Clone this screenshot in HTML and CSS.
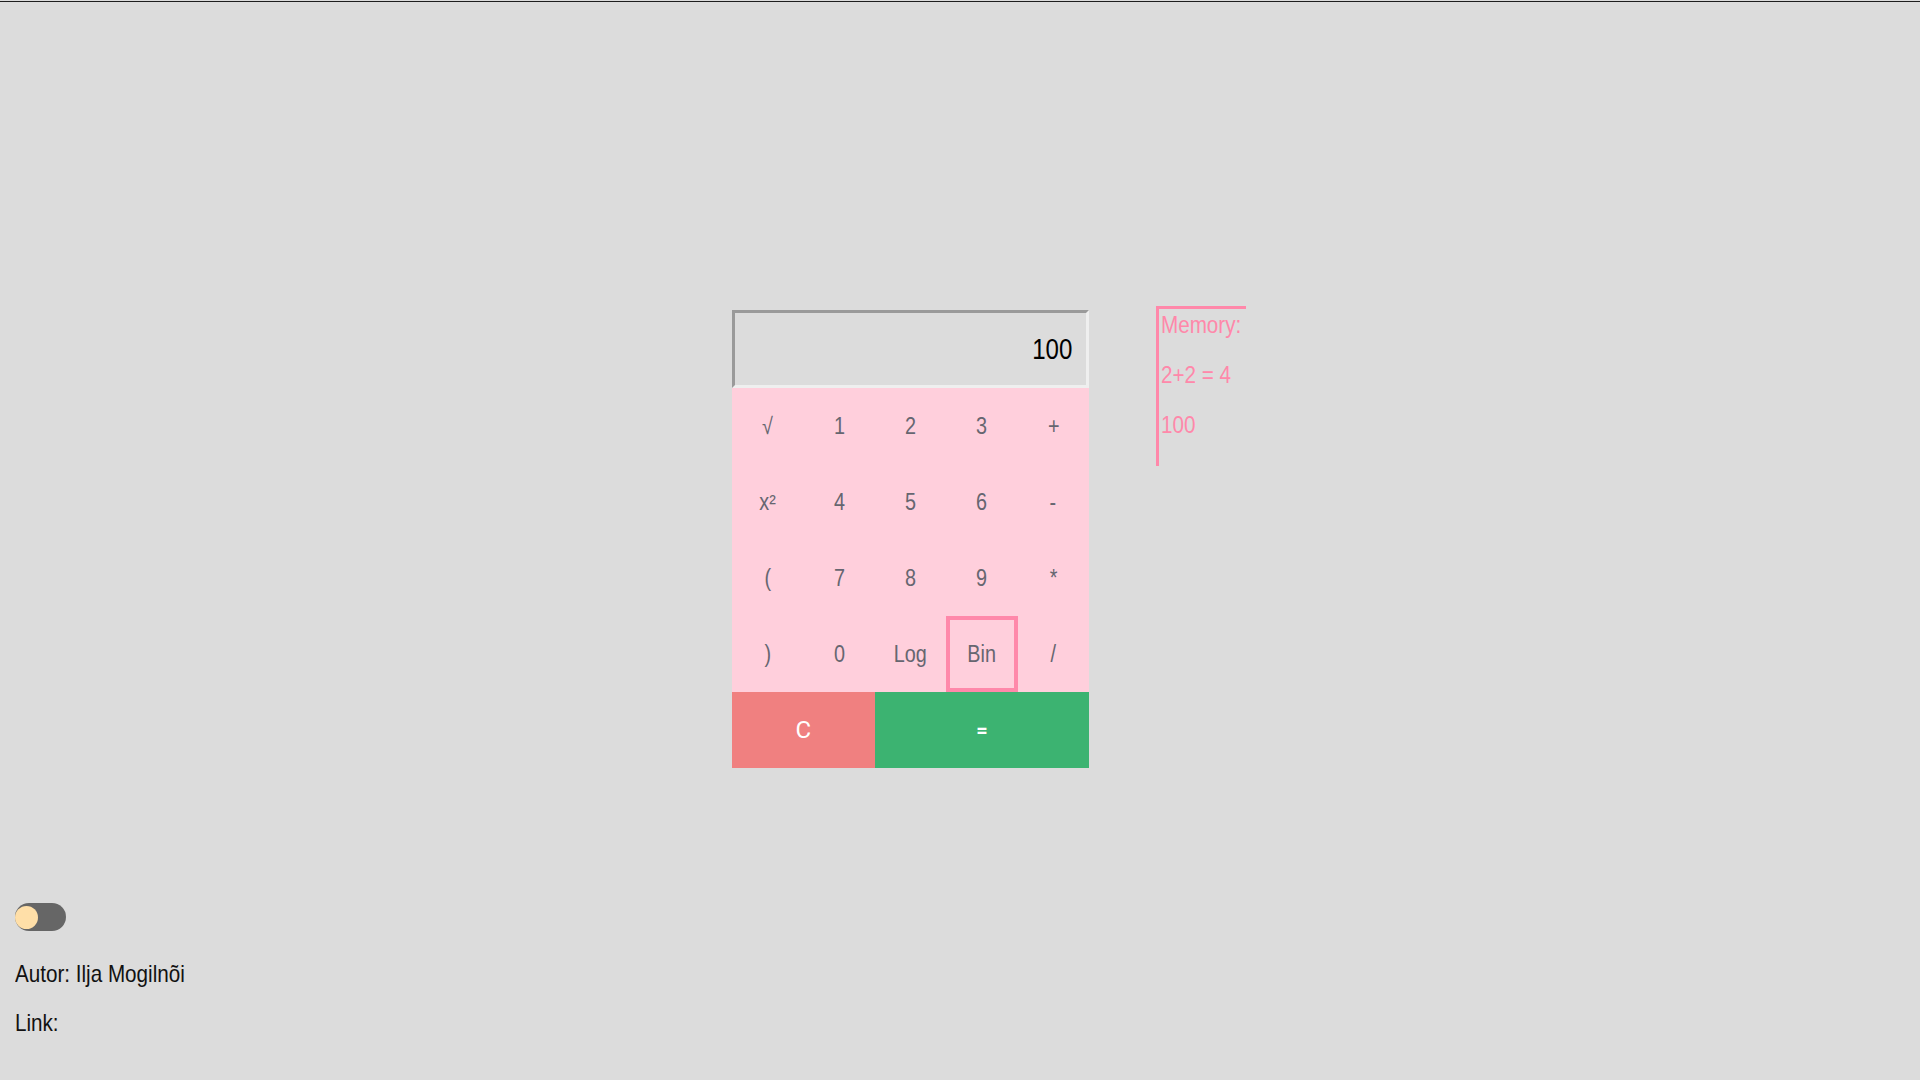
FILE: index.html
```html
<!DOCTYPE html>
<html lang="et">
<head>
<meta charset="utf-8">
<title>Kalkulaator</title>
<link rel="stylesheet" href="styles.css">
</head>
<body>
<div class="topline"></div>
<main class="stage">
  <section class="calc">
    <div class="display"><span class="narrow narrow-right">100</span></div>
    <div class="keys">
      <button class="key"><span class="narrow">√</span></button>
      <button class="key"><span class="narrow">1</span></button>
      <button class="key"><span class="narrow">2</span></button>
      <button class="key"><span class="narrow">3</span></button>
      <button class="key"><span class="narrow">+</span></button>
      <button class="key"><span class="narrow">x²</span></button>
      <button class="key"><span class="narrow">4</span></button>
      <button class="key"><span class="narrow">5</span></button>
      <button class="key"><span class="narrow">6</span></button>
      <button class="key"><span class="narrow">-</span></button>
      <button class="key"><span class="narrow">(</span></button>
      <button class="key"><span class="narrow">7</span></button>
      <button class="key"><span class="narrow">8</span></button>
      <button class="key"><span class="narrow">9</span></button>
      <button class="key"><span class="narrow">*</span></button>
      <button class="key"><span class="narrow">)</span></button>
      <button class="key"><span class="narrow">0</span></button>
      <button class="key"><span class="narrow">Log</span></button>
      <button class="key key-active"><span class="narrow">Bin</span></button>
      <button class="key"><span class="narrow">/</span></button>
      <button class="key key-clear">C</button>
      <button class="key key-equals">=</button>
    </div>
  </section>
  <aside class="memory">
    <p><span class="narrow narrow-left">Memory:</span></p>
    <p><span class="narrow narrow-left">2+2 = 4</span></p>
    <p><span class="narrow narrow-left">100</span></p>
  </aside>
</main>
<footer class="footer">
  <div class="toggle"><span class="knob"></span></div>
  <p class="info"><span class="narrow narrow-left">Autor: Ilja Mogilnõi</span></p>
  <p class="info"><span class="narrow narrow-left">Link:</span></p>
</footer>
</body>
</html>
```
FILE: styles.css
```css
html, body {
  margin: 0;
  padding: 0;
  background: #dcdcdc;
  height: 100%;
  overflow: hidden;
}
body {
  font-family: "Liberation Sans", Arial, sans-serif;
  color: #111;
}
.narrow {
  display: inline-block;
  transform: scaleX(0.86);
  transform-origin: center;
  white-space: nowrap;
}
.narrow-left {
  transform-origin: left center;
}
.narrow-right {
  transform-origin: right center;
  transform: scaleX(0.83);
}
.topline {
  margin-top: 1px;
  height: 1px;
  background: #1e1e1e;
}
.stage {
  display: flex;
  justify-content: center;
  align-items: flex-start;
  gap: 67px;
  padding-top: 308px;
  padding-left: 58px;
}
.calc {
  width: 357px;
  display: flex;
  flex-direction: column;
}
.display {
  box-sizing: border-box;
  height: 78px;
  border: 3px solid;
  border-color: #9a9a9a #efefef #efefef #9a9a9a;
  display: flex;
  align-items: center;
  justify-content: flex-end;
  padding-right: 14px;
  font-size: 29px;
  color: #000;
}
.keys {
  display: grid;
  grid-template-columns: repeat(5, 1fr);
  grid-auto-rows: 76px;
  background: #ffcfdc;
}
.key {
  box-sizing: border-box;
  border: 3px solid transparent;
  background: transparent;
  font-family: "Liberation Sans", Arial, sans-serif;
  font-size: 23px;
  color: #666670;
  padding: 0;
  margin: 0;
}
.key-active {
  border: 4px solid #ff88aa;
}
.key-clear {
  grid-column: span 2;
  background: #f08080;
  color: #fff;
  font-family: Roboto, "Liberation Sans", sans-serif;
  font-size: 24px;
}
.key-equals {
  grid-column: span 3;
  background: #3cb371;
  color: #fff;
  font-family: Roboto, "Liberation Sans", sans-serif;
  font-weight: 700;
  font-size: 20px;
}
.memory {
  width: 85px;
  border-top: 3px solid #ff88aa;
  border-left: 3px solid #ff88aa;
  margin-top: -4px;
  padding: 3px 0 4px 2px;
  color: #ff88aa;
  font-size: 24px;
  line-height: 26px;
}
.memory p {
  margin: 0 0 24px;
}
.footer {
  margin-top: 135px;
  padding-left: 15px;
}
.toggle {
  width: 51px;
  height: 28px;
  border-radius: 14px;
  background: #666;
  display: flex;
  align-items: center;
}
.knob {
  width: 23px;
  height: 23px;
  border-radius: 50%;
  background: #ffdfa8;
}
.info {
  margin: 0;
  font-size: 24px;
  line-height: 27px;
  margin-top: 22px;
}
.toggle + .info {
  margin-top: 29px;
}
```
